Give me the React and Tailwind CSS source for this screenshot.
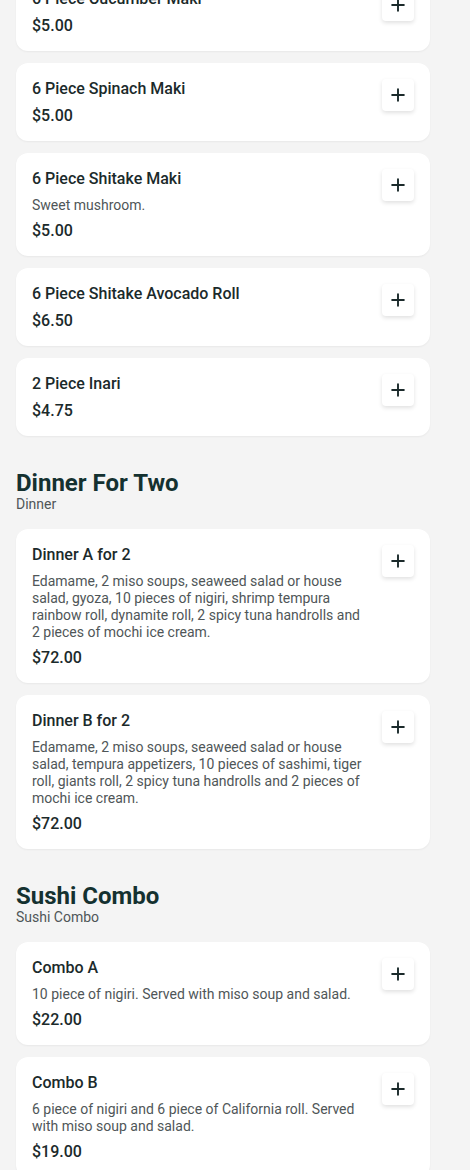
import { Plus } from 'lucide-react';

const sections = [
    {
        items: [
            { name: '6 Piece Cucumber Maki', price: '$5.00' },
            { name: '6 Piece Spinach Maki', price: '$5.00' },
            { name: '6 Piece Shitake Maki', desc: 'Sweet mushroom.', price: '$5.00' },
            { name: '6 Piece Shitake Avocado Roll', price: '$6.50' },
            { name: '2 Piece Inari', price: '$4.75' },
        ],
    },
    {
        title: 'Dinner For Two',
        subtitle: 'Dinner',
        items: [
            {
                name: 'Dinner A for 2',
                desc: 'Edamame, 2 miso soups, seaweed salad or house salad, gyoza, 10 pieces of nigiri, shrimp tempura rainbow roll, dynamite roll, 2 spicy tuna handrolls and 2 pieces of mochi ice cream.',
                price: '$72.00',
            },
            {
                name: 'Dinner B for 2',
                desc: 'Edamame, 2 miso soups, seaweed salad or house salad, tempura appetizers, 10 pieces of sashimi, tiger roll, giants roll, 2 spicy tuna handrolls and 2 pieces of mochi ice cream.',
                price: '$72.00',
            },
        ],
    },
    {
        title: 'Sushi Combo',
        subtitle: 'Sushi Combo',
        items: [
            { name: 'Combo A', desc: '10 piece of nigiri. Served with miso soup and salad.', price: '$22.00' },
            { name: 'Combo B', desc: '6 piece of nigiri and 6 piece of California roll. Served with miso soup and salad.', price: '$19.00' },
        ],
    },
];

function MenuItem({ item }) {
    return (
        <div className="flex gap-4 bg-white rounded-xl pt-[17px] pb-[13px] px-4 shadow-[0_1px_2px_rgba(0,0,0,0.05)]">
            <div className="flex-1">
                <h3 className="text-base leading-[18px] font-medium text-[#1b2a2b]">{item.name}</h3>
                {item.desc && (
                    <p className="mt-[9px] text-sm leading-[17px] text-[#4f5658]">{item.desc}</p>
                )}
                <p className={`${item.desc ? 'mt-[5px]' : 'mt-1.5'} text-base leading-6 font-medium text-[#1b2a2b]`}>{item.price}</p>
            </div>
            <button className="w-8 h-8 -mt-px shrink-0 flex items-center justify-center bg-white rounded shadow-[0_2px_4px_rgba(0,0,0,0.12)] text-[#1b2a2b]">
                <Plus size={20} strokeWidth={2.3} />
            </button>
        </div>
    );
}

export default function App() {
    return (
        <div className="min-h-screen bg-[#f4f4f4] px-4 overflow-hidden font-['Roboto',sans-serif]">
            <div className="w-[414px] -mt-[27px] pb-10">
                {sections.map((section, i) => (
                    <div key={i} className={i > 0 ? 'mt-[34px]' : ''}>
                        {section.title && (
                            <div className="pt-px mb-[15px]">
                                <h2 className="text-2xl leading-6 font-bold text-[#143130]">{section.title}</h2>
                                <p className="-mt-px text-sm leading-5 text-[#4f5658]">{section.subtitle}</p>
                            </div>
                        )}
                        <div className="flex flex-col gap-3">
                            {section.items.map((item) => (
                                <MenuItem key={item.name} item={item} />
                            ))}
                        </div>
                    </div>
                ))}
            </div>
        </div>
    );
}
